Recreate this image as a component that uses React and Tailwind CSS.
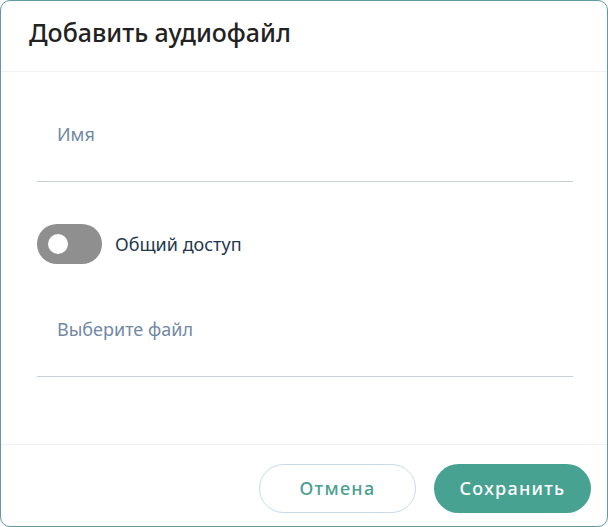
import React from 'react'

function Field({ label }) {
  return (
    <div className="h-[70px] ml-[36px] mr-[34px] border-b border-[#c8d0d8] pt-[9px] px-[20px]">
      <span className="text-[18px] leading-[26px] text-[#7189a3]">{label}</span>
    </div>
  )
}

export default function App() {
  return (
    <div className="w-[608px] h-[527px] bg-white border border-[#62999a] rounded-[10px] flex flex-col font-['Noto_Sans',sans-serif]">
      <div className="h-[71px] shrink-0 border-b border-[#f0f1f2] flex items-center px-[28px]">
        <h2 className="text-[25px] font-medium text-[#222] pb-[6px]">Добавить аудиофайл</h2>
      </div>

      <div className="flex-1 pt-[40px]">
        <Field label="Имя" />

        <div className="mt-[42px] mx-[36px] flex items-center gap-[13px]">
          <div className="w-[65px] h-[40px] rounded-full bg-[#8f8f8f] flex items-center pl-[11px]">
            <div className="w-[20px] h-[20px] rounded-full bg-white" />
          </div>
          <span className="text-[18px] text-[#22384e]">Общий доступ</span>
        </div>

        <div className="mt-[43px]">
          <Field label="Выберите файл" />
        </div>
      </div>

      <div className="h-[82px] shrink-0 border-t border-[#f0f1f2] flex justify-end gap-[18px] pt-[19px] pr-[16px]">
        <button className="w-[157px] h-[49px] rounded-full border border-[#c9d9e8] text-[18px] font-medium tracking-[1.3px] text-[#4aa08f]">
          Отмена
        </button>
        <button className="w-[157px] h-[49px] rounded-full bg-[#47a291] text-[18px] font-medium tracking-[1.3px] text-white">
          Сохранить
        </button>
      </div>
    </div>
  )
}
